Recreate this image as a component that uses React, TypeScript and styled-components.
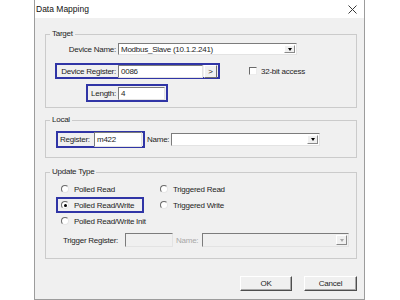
import React from "react";
import styled, { createGlobalStyle } from "styled-components";

const GlobalStyle = createGlobalStyle`
  html, body {
    margin: 0;
    padding: 0;
    background: #ffffff;
  }
  body {
    font-family: "Liberation Sans", Arial, sans-serif;
  }
`;

const Window = styled.div`
  box-sizing: border-box;
  margin-left: 34px;
  width: 331px;
  height: 300px;
  border: 1px solid #9c9c9c;
  border-top: none;
  background: #f0f0f0;
  display: flex;
  flex-direction: column;
  color: #1e1e1e;
  font-size: 8px;
  letter-spacing: -0.25px;
`;

const TitleBar = styled.div`
  height: 18px;
  flex: none;
  background: #ffffff;
  display: flex;
  align-items: center;
  justify-content: space-between;
  padding: 0 7px 0 1px;
`;

const Title = styled.span`
  font-size: 8.5px;
  letter-spacing: 0;
  color: #111;
`;

const Body = styled.div`
  display: flex;
  flex-direction: column;
  padding: 11px 7px 0 10px;
`;

const Group = styled.fieldset<{ $mt: number; $pb: number }>`
  margin: ${(p) => p.$mt}px 0 0;
  padding: 0 0 ${(p) => p.$pb}px;
  min-width: 0;
  border: 1px solid #cbcbcb;
`;

const Legend = styled.legend`
  margin-left: 4px;
  padding: 0 2px;
  line-height: 10px;
  font-size: 8px;
`;

const Row = styled.div<{ $mt: number; $h: number; $pl?: number }>`
  display: flex;
  align-items: center;
  height: ${(p) => p.$h}px;
  margin-top: ${(p) => p.$mt}px;
  padding-left: ${(p) => p.$pl ?? 0}px;
`;

const Label = styled.span<{ $w: number; $right?: boolean; $pl?: number; $ml?: number; $disabled?: boolean }>`
  flex: none;
  box-sizing: border-box;
  width: ${(p) => p.$w}px;
  margin-left: ${(p) => p.$ml ?? 0}px;
  padding-left: ${(p) => p.$pl ?? 0}px;
  padding-right: ${(p) => (p.$right ? 2 : 0)}px;
  text-align: ${(p) => (p.$right ? "right" : "left")};
  white-space: nowrap;
  color: ${(p) => (p.$disabled ? "#a8a8a8" : "inherit")};
`;

const Highlight = styled.div<{ $h: number; $w?: number; $ml?: number; $pl?: number }>`
  box-sizing: border-box;
  display: flex;
  align-items: center;
  height: ${(p) => p.$h}px;
  width: ${(p) => (p.$w ? `${p.$w}px` : "auto")};
  margin-left: ${(p) => p.$ml ?? 0}px;
  padding-left: ${(p) => p.$pl ?? 0}px;
  padding-right: 1px;
  border: 2px solid #3035a6;
`;

const Edit = styled.div<{ $w: number; $h: number; $disabled?: boolean }>`
  flex: none;
  box-sizing: border-box;
  display: flex;
  align-items: center;
  width: ${(p) => p.$w}px;
  height: ${(p) => p.$h}px;
  padding-left: 2px;
  background: ${(p) => (p.$disabled ? "#f0f0f0" : "#ffffff")};
  border: 1px solid;
  border-color: #7c7c7c #e3e3e3 #e3e3e3 #7c7c7c;
  white-space: nowrap;
  overflow: hidden;
`;

const Combo = styled(Edit)`
  justify-content: space-between;
  padding-right: 1px;
`;

const DropButton = styled.span<{ $disabled?: boolean }>`
  flex: none;
  box-sizing: border-box;
  width: 11px;
  height: calc(100% - 2px);
  display: flex;
  align-items: center;
  justify-content: center;
  background: #f0f0f0;
  border: 1px solid;
  border-color: #ffffff #8a8a8a #8a8a8a #ffffff;

  &::after {
    content: "";
    border-left: 2.5px solid transparent;
    border-right: 2.5px solid transparent;
    border-top: 3px solid ${(p) => (p.$disabled ? "#a8a8a8" : "#000000")};
  }
`;

const SmallButton = styled.span`
  flex: none;
  box-sizing: border-box;
  width: 13px;
  height: 13px;
  margin-left: 1px;
  display: flex;
  align-items: center;
  justify-content: center;
  background: #f0f0f0;
  border: 1px solid;
  border-color: #ffffff #6e6e6e #6e6e6e #ffffff;
  font-size: 8px;
`;

const CheckWrap = styled.label<{ $ml: number }>`
  display: flex;
  align-items: center;
  gap: 4px;
  margin-left: ${(p) => p.$ml}px;
`;

const CheckBox = styled.span`
  box-sizing: border-box;
  width: 8px;
  height: 8px;
  background: #ffffff;
  border: 1px solid;
  border-color: #6a6a6a #ececec #ececec #6a6a6a;
`;

const RadioGrid = styled.div`
  display: grid;
  grid-template-columns: 114px 1fr;
  grid-auto-rows: 16px;
  margin-top: 4px;
`;

const RadioCell = styled.div<{ $pl?: number }>`
  display: flex;
  align-items: center;
  padding-left: ${(p) => p.$pl ?? 0}px;
`;

const Radio = styled.span<{ $checked?: boolean }>`
  flex: none;
  box-sizing: border-box;
  width: 8px;
  height: 8px;
  margin-right: 5px;
  border-radius: 50%;
  background: #ffffff;
  border: 1px solid;
  border-color: #6a6a6a #e6e6e6 #e6e6e6 #6a6a6a;
  display: flex;
  align-items: center;
  justify-content: center;

  &::after {
    content: "";
    width: 3px;
    height: 3px;
    border-radius: 50%;
    background: ${(p) => (p.$checked ? "#000000" : "transparent")};
  }
`;

const ButtonRow = styled.div`
  display: flex;
  justify-content: flex-end;
  gap: 12px;
  margin-top: 17px;
`;

const PushButton = styled.button<{ $w: number }>`
  box-sizing: border-box;
  width: ${(p) => p.$w}px;
  height: 15px;
  padding: 0;
  font-family: inherit;
  font-size: 8px;
  letter-spacing: -0.25px;
  color: #1e1e1e;
  background: #f0f0f0;
  border: 1px solid;
  border-color: #ffffff #4e4e4e #4e4e4e #ffffff;
  box-shadow: inset -1px -1px 0 #a8a8a8;
`;

const CloseIcon = () => (
  <svg width="9" height="9" viewBox="0 0 9 9">
    <path d="M0.5 0.5 L8.5 8.5 M8.5 0.5 L0.5 8.5" stroke="#3a3a3a" strokeWidth="1" />
  </svg>
);

export default function App() {
  return (
    <>
      <GlobalStyle />
      <Window>
        <TitleBar>
          <Title>Data Mapping</Title>
          <CloseIcon />
        </TitleBar>

        <Body>
          {/* Target */}
          <Group $mt={0} $pb={5}>
            <Legend>Target</Legend>
            <Row $mt={4} $h={12}>
              <Label $w={72} $right>Device Name:</Label>
              <Combo $w={179} $h={12}>
                Modbus_Slave (10.1.2.241)
                <DropButton />
              </Combo>
            </Row>
            <Row $mt={8} $h={16} $pl={9}>
              <Highlight $h={16}>
                <Label $w={61} $right>Device Register:</Label>
                <Edit $w={85} $h={13}>0086</Edit>
                <SmallButton>&gt;</SmallButton>
              </Highlight>
              <CheckWrap $ml={29}>
                <CheckBox />
                32-bit access
              </CheckWrap>
            </Row>
            <Row $mt={5} $h={18} $pl={40}>
              <Highlight $h={18}>
                <Label $w={30} $right>Length:</Label>
                <Edit $w={47} $h={13}>4</Edit>
              </Highlight>
            </Row>
          </Group>

          {/* Local */}
          <Group $mt={7} $pb={9}>
            <Legend>Local</Legend>
            <Row $mt={6} $h={17} $pl={10}>
              <Highlight $h={17}>
                <Label $w={36} $pl={2}>Register:</Label>
                <Edit $w={48} $h={15}>m422</Edit>
              </Highlight>
              <Label $w={24} $ml={2}>Name:</Label>
              <Combo $w={149} $h={13}>
                <span />
                <DropButton />
              </Combo>
            </Row>
          </Group>

          {/* Update Type */}
          <Group $mt={9} $pb={11}>
            <Legend>Update Type</Legend>
            <RadioGrid>
              <RadioCell $pl={15}>
                <Radio />
                Polled Read
              </RadioCell>
              <RadioCell>
                <Radio />
                Triggered Read
              </RadioCell>
              <RadioCell>
                <Highlight $h={16} $w={88} $ml={10} $pl={3}>
                  <Radio $checked />
                  Polled Read/Write
                </Highlight>
              </RadioCell>
              <RadioCell>
                <Radio />
                Triggered Write
              </RadioCell>
              <RadioCell $pl={15}>
                <Radio />
                Polled Read/Write Init
              </RadioCell>
            </RadioGrid>
            <Row $mt={4} $h={14} $pl={17}>
              <Label $w={62}>Trigger Register:</Label>
              <Edit $w={48} $h={14} $disabled />
              <Label $w={26} $ml={3} $disabled>Name:</Label>
              <Combo $w={147} $h={14} $disabled>
                <span />
                <DropButton $disabled />
              </Combo>
            </Row>
          </Group>

          <ButtonRow>
            <PushButton $w={52}>OK</PushButton>
            <PushButton $w={53}>Cancel</PushButton>
          </ButtonRow>
        </Body>
      </Window>
    </>
  );
}
